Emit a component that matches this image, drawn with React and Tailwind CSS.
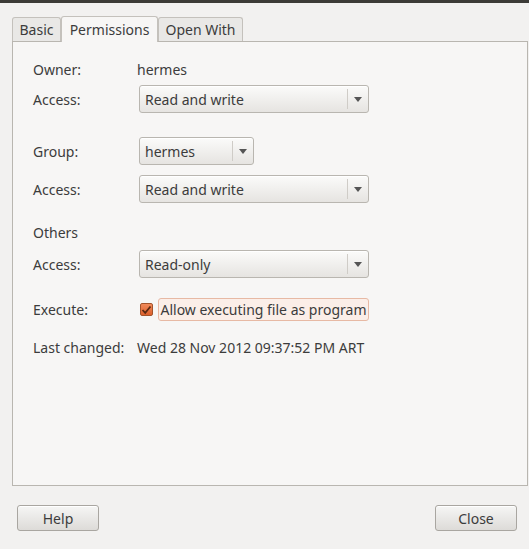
import React from "react";

function Combo({ value, width }) {
  return (
    <div
      className={`flex h-[28px] ${width} items-stretch rounded-[3px] border border-[#b9b6b0] bg-gradient-to-b from-[#fbfbfa] to-[#e6e4e1] shadow-[inset_0_1px_0_#fff]`}
    >
      <div className="flex flex-1 items-center pl-[5px] text-[#3c3c3c]">{value}</div>
      <div className="my-[3px] w-px bg-[#cfccc7]" />
      <div className="flex w-[20px] items-center justify-center">
        <svg width="8" height="5" viewBox="0 0 8 5">
          <path d="M0 0 L8 0 L4 5 Z" fill="#555" />
        </svg>
      </div>
    </div>
  );
}

function Row({ label, children, className = "" }) {
  return (
    <div className={`flex items-center ${className}`}>
      <div className="w-[104px] text-[#3c3c3c]">{label}</div>
      {children}
    </div>
  );
}

function Button({ children }) {
  return (
    <div className="flex h-[26px] w-[82px] items-center justify-center rounded-[3px] border border-[#a9a6a1] bg-gradient-to-b from-[#f6f6f5] to-[#dddbd8] text-[#3c3c3c] shadow-[inset_0_1px_0_#fff]">
      {children}
    </div>
  );
}

export default function App() {
  return (
    <div
      className="flex h-[549px] w-[529px] flex-col bg-[#f2f1f0] text-[14px]"
      style={{ fontFamily: '"Noto Sans", "Open Sans", sans-serif' }}
    >
      <div className="h-[3px] bg-[#3c3b37]" />
      <div className="flex items-end pl-[12px] pt-[13px]">
        <div className="flex h-[24px] w-[49px] items-center justify-center rounded-t-[3px] border border-b-0 border-[#c4c1bc] bg-[#e9e8e6] text-[#3c3c3c]">
          Basic
        </div>
        <div className="relative z-10 -mb-px flex h-[26px] w-[97px] items-center justify-center rounded-t-[3px] border border-b-0 border-[#c4c1bc] bg-[#f7f6f5] text-[#3c3c3c]">
          Permissions
        </div>
        <div className="flex h-[24px] w-[85px] items-center justify-center rounded-t-[3px] border border-b-0 border-[#c4c1bc] bg-[#e9e8e6] text-[#3c3c3c]">
          Open With
        </div>
      </div>
      <div className="ml-[12px] mr-px flex h-[445px] flex-col border border-[#b9b6b0] bg-[#f7f6f5] pl-[20px] pt-[16px]">
        <Row label="Owner:" className="h-[22px]">
          <div className="text-[#3c3c3c]">hermes</div>
        </Row>
        <Row label="Access:" className="mt-[5px]">
          <div className="pl-[2px]">
            <Combo value="Read and write" width="w-[230px]" />
          </div>
        </Row>
        <Row label="Group:" className="mt-[24px]">
          <div className="pl-[2px]">
            <Combo value="hermes" width="w-[115px]" />
          </div>
        </Row>
        <Row label="Access:" className="mt-[10px]">
          <div className="pl-[2px]">
            <Combo value="Read and write" width="w-[230px]" />
          </div>
        </Row>
        <div className="mt-[19px] h-[22px] text-[#3c3c3c] leading-[22px]">Others</div>
        <Row label="Access:" className="mt-[6px]">
          <div className="pl-[2px]">
            <Combo value="Read-only" width="w-[230px]" />
          </div>
        </Row>
        <Row label="Execute:" className="mt-[20px]">
          <div className="flex items-center pl-[3px]">
            <div className="flex h-[13px] w-[13px] items-center justify-center rounded-[2px] border border-[#a3532b] bg-gradient-to-b from-[#f08a5a] to-[#dd5f2a]">
              <svg width="11" height="10" viewBox="0 0 11 10">
                <path d="M1.5 5 L4.2 7.8 L9.5 1.5" stroke="#5a2a12" strokeWidth="1.8" fill="none" />
              </svg>
            </div>
            <div className="ml-[5px] flex h-[23px] w-[211px] items-center justify-center rounded-[3px] border border-[#e7b9a4] bg-[#fbeee8] text-[#3c3c3c]">
              Allow executing file as program
            </div>
          </div>
        </Row>
        <Row label="Last changed:" className="mt-[15px] h-[22px]">
          <div className="text-[#3c3c3c]">Wed 28 Nov 2012 09:37:52 PM ART</div>
        </Row>
      </div>
      <div className="flex justify-between pl-[12px] pr-[12px] pt-[19px]">
        <div className="pl-[5px]">
          <Button>Help</Button>
        </div>
        <Button>Close</Button>
      </div>
    </div>
  );
}
